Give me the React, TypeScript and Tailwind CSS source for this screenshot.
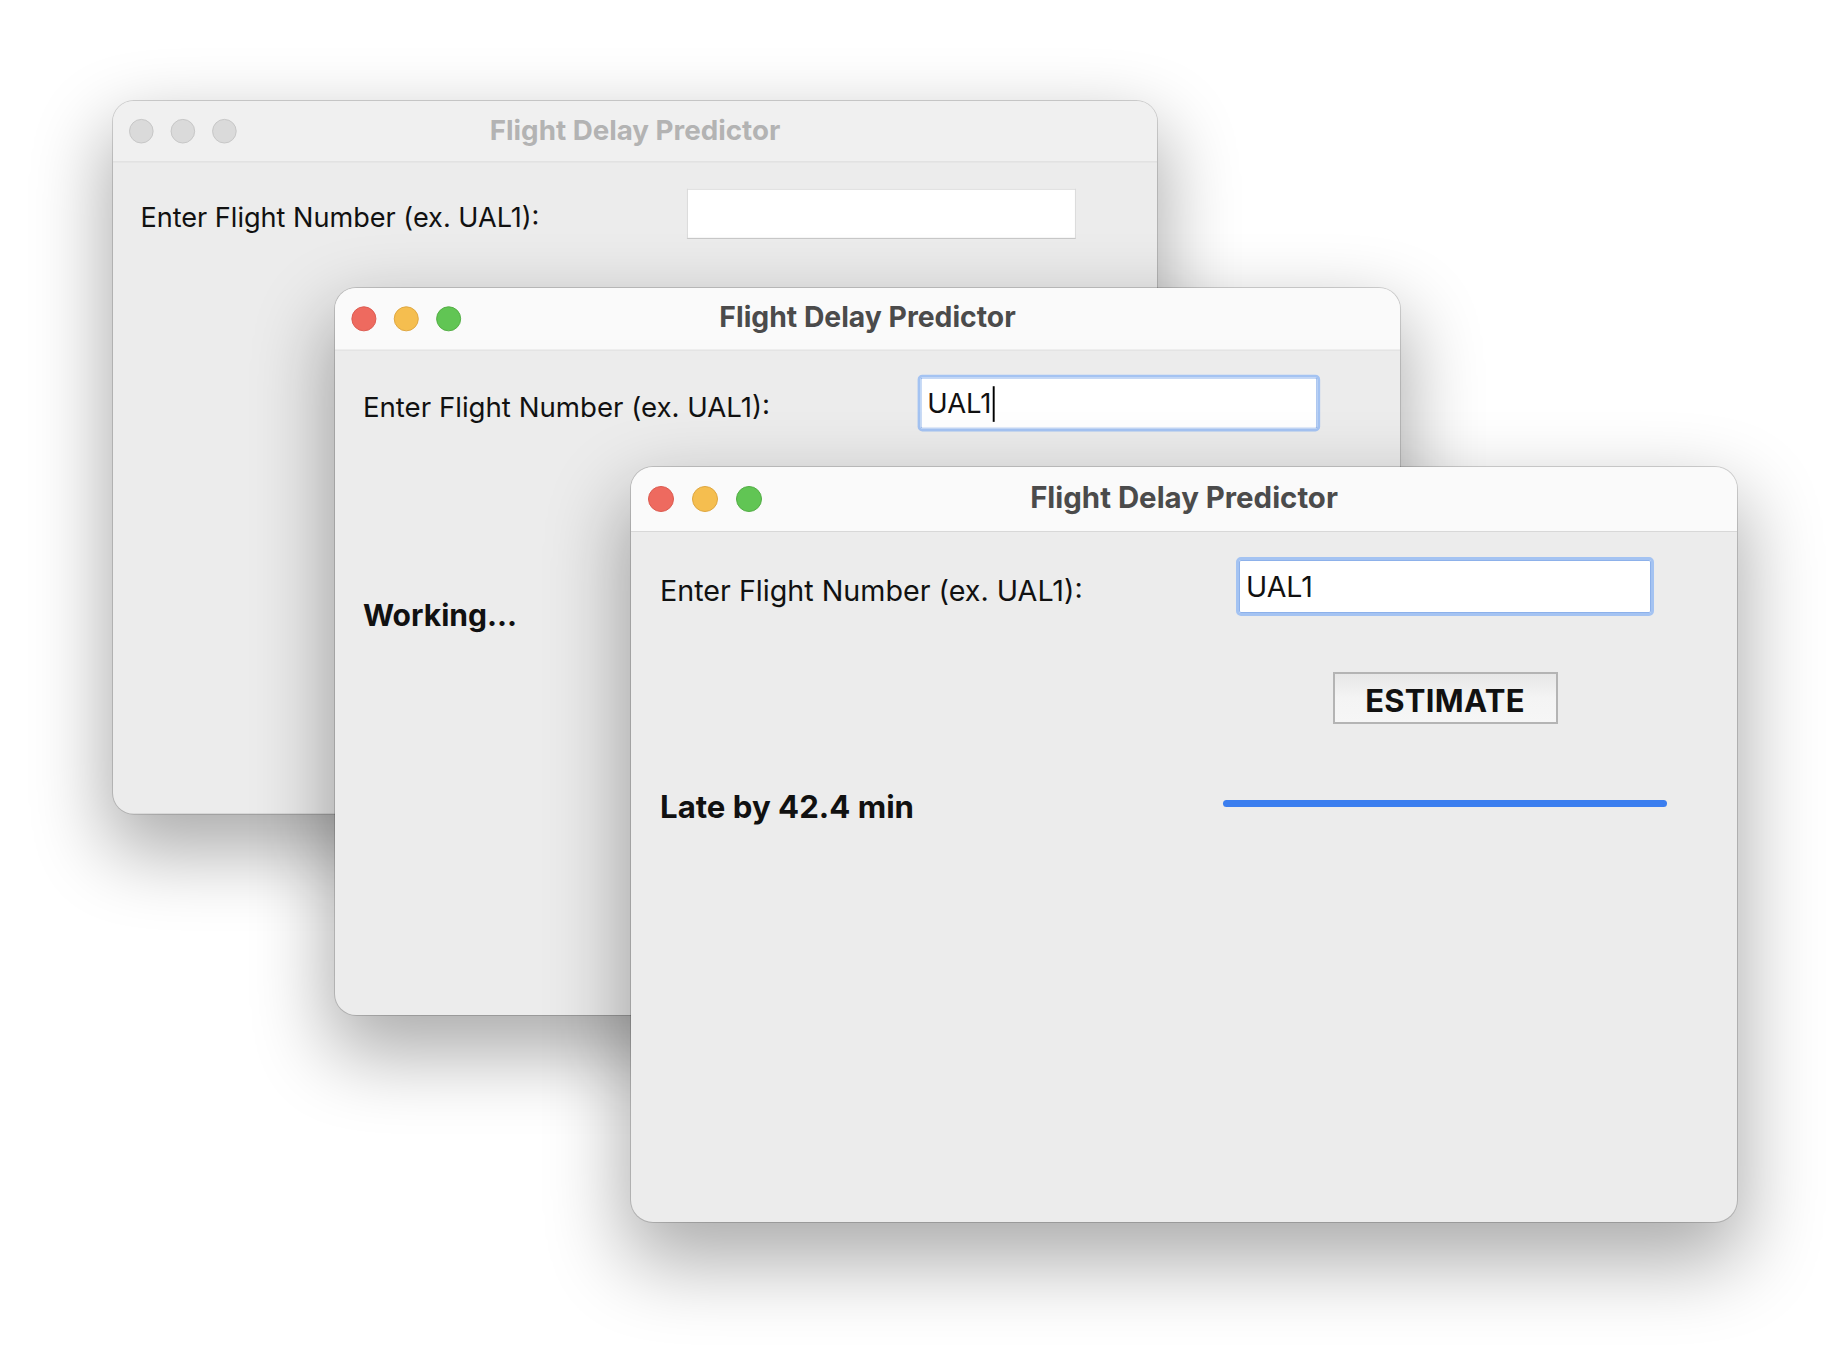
import React from "react";

type Mode = "idle" | "working" | "done";

// macOS-style window chrome at the largest (front) window's size; back windows are scaled down
function Light({ fill, edge }: { fill: string; edge: string }) {
  return <span className={`block size-[26px] rounded-full border ${fill} ${edge}`} />;
}

function FlightField({ value, focused, caret }: { value: string; focused: boolean; caret?: boolean }) {
  if (!focused) {
    return (
      <div className="h-[59px] p-[3px]">
        <div className="h-full bg-white border border-[#d8d8d8] border-b-[#bdbdbd]" />
      </div>
    );
  }
  return (
    <div className="flex h-[59px] items-center rounded-[5px] border-[3px] border-[#a4c3f2] bg-white pl-[7px] pt-[1px] shadow-[inset_0_0_0_1px_#8db1ea]">
      <span className="text-[28.5px] leading-none text-[#111]">{value}</span>
      {caret && <span className="ml-[1px] block h-[37px] w-[2px] bg-black" />}
    </div>
  );
}

function PredictorWindow({ mode, active }: { mode: Mode; active: boolean }) {
  return (
    <div className="w-[1106px] h-[755px] overflow-hidden rounded-[22px] bg-[#ececec] shadow-[0_0_0_1px_rgba(0,0,0,0.16),0_34px_80px_6px_rgba(0,0,0,0.33)]">
      <div
        className={`grid h-[65px] grid-cols-[1fr_auto_1fr] items-center border-b border-[#d8d8d8] px-[17px] ${
          active ? "bg-[#fafafa]" : "bg-[#f0f0f0]"
        }`}
      >
        <div className="flex gap-[18px]">
          {active ? (
            <>
              <Light fill="bg-[#ee6a5f]" edge="border-[#dc5b50]" />
              <Light fill="bg-[#f5be4f]" edge="border-[#dea63f]" />
              <Light fill="bg-[#61c554]" edge="border-[#52ad44]" />
            </>
          ) : (
            <>
              <Light fill="bg-[#dadada]" edge="border-[#c5c5c5]" />
              <Light fill="bg-[#dadada]" edge="border-[#c5c5c5]" />
              <Light fill="bg-[#dadada]" edge="border-[#c5c5c5]" />
            </>
          )}
        </div>
        <div
          className={`-mt-[3px] text-[29.4px] font-bold leading-none ${active ? "text-[#4b4b4b]" : "text-[#b3b3b3]"}`}
        >
          Flight Delay Predictor
        </div>
        <div />
      </div>

      <div className="grid grid-cols-[576px_418px] items-start px-[29px] pt-[25px] text-[#111]">
        <div className="mt-[20px] text-[28.7px] leading-none">Enter Flight Number (ex. UAL1):</div>
        <FlightField value={mode === "idle" ? "" : "UAL1"} focused={mode !== "idle"} caret={mode === "working"} />

        <div className="col-start-2 mt-[56px] justify-self-center">
          <button
            type="button"
            className="flex h-[52px] w-[225px] items-center justify-center border-2 border-[#b4b4b4] bg-linear-to-b from-[#e7e7e7] via-[#f4f4f4] to-[#f6f6f6] pt-[5px] text-[31px] font-bold leading-none tracking-[0.3px] text-[#111]"
          >
            ESTIMATE
          </button>
        </div>

        <div className="col-start-1 mt-[68px] text-[31.2px] font-bold leading-none">
          {mode === "working" ? "Working..." : mode === "done" ? "Late by 42.4 min" : ""}
        </div>
        <div className="-mx-[13px] mt-[76px] h-[7px]">
          {mode === "done" && <div className="h-full rounded-full bg-[#3b7eef]" />}
        </div>
      </div>
    </div>
  );
}

export default function App() {
  return (
    <div className="relative h-[1360px] w-[1828px] overflow-hidden bg-white font-['Inter','Noto_Sans',sans-serif]">
      <div className="absolute left-[113px] top-[101px] origin-top-left scale-[0.944]">
        <PredictorWindow mode="idle" active={false} />
      </div>
      <div className="absolute left-[335px] top-[288px] origin-top-left scale-[0.963]">
        <PredictorWindow mode="working" active />
      </div>
      <div className="absolute left-[631px] top-[467px]">
        <PredictorWindow mode="done" active />
      </div>
    </div>
  );
}
